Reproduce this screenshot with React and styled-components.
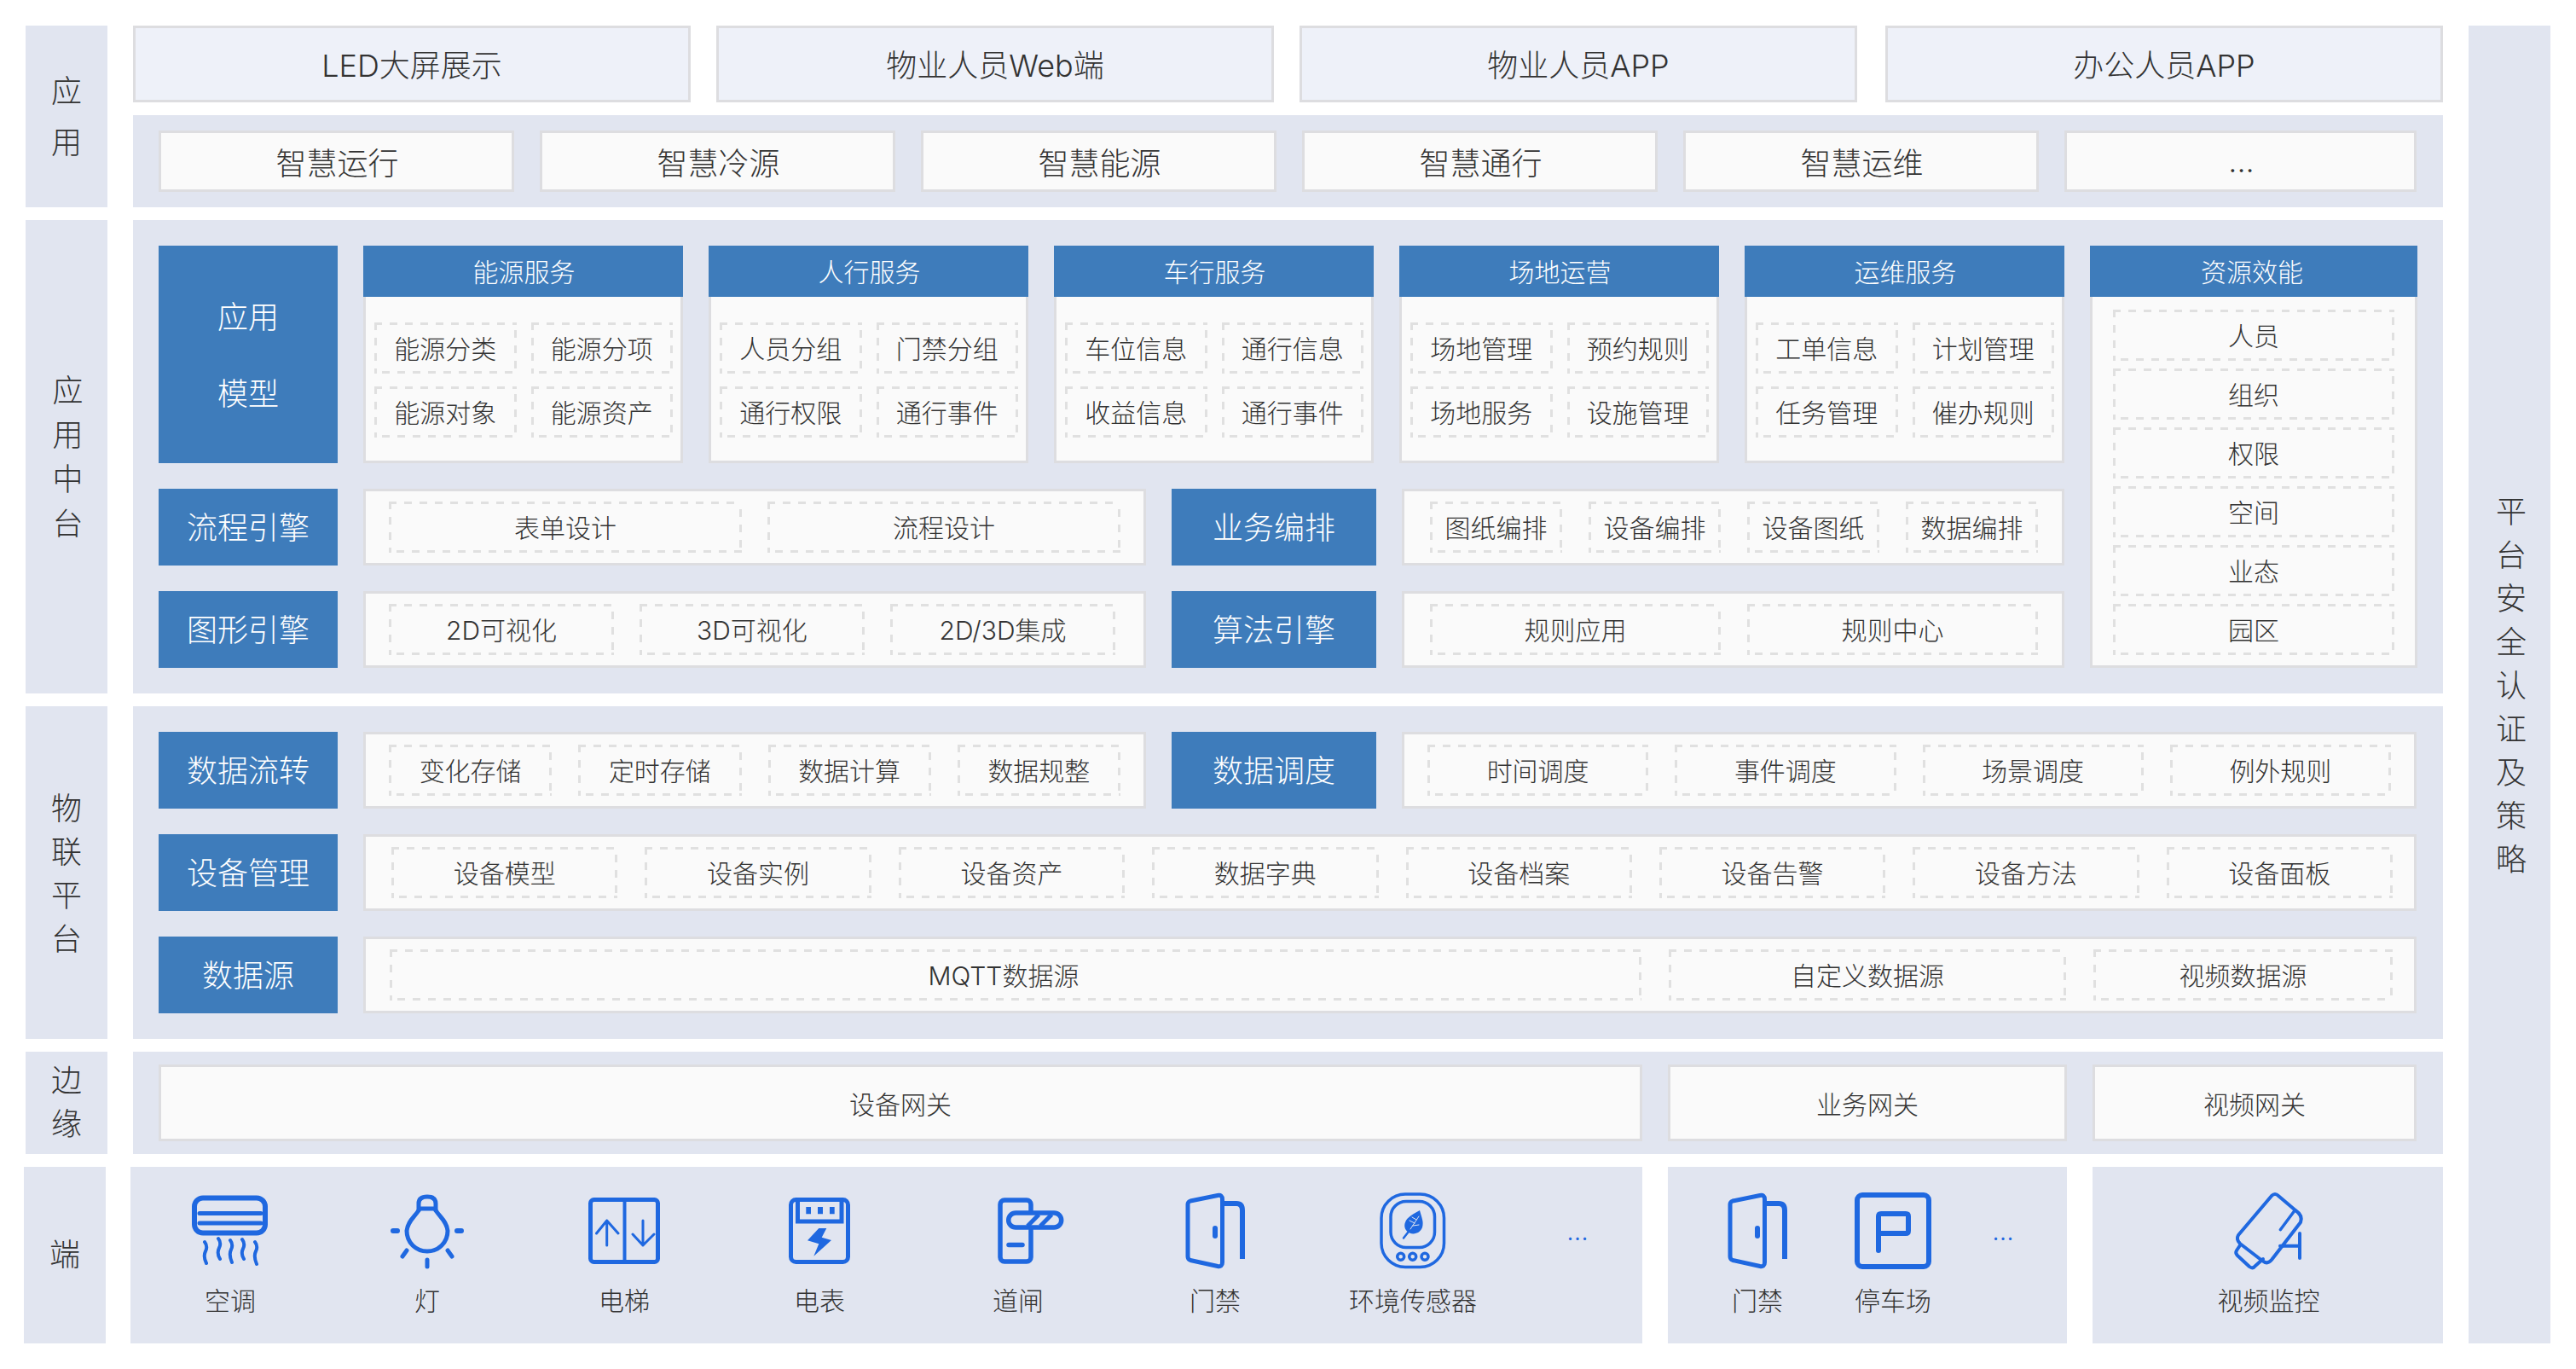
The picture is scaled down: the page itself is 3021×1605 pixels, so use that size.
import React from 'react';
import styled, { createGlobalStyle } from 'styled-components';

const INK = '#333333';
const BAND = '#e1e5f0';
const EDGE = '#dddde0';
const PAPER = '#fafafa';
const BLUE = '#3e7cbb';
const ICON = '#1f68e0';
const DASH = '#e0e0e0';

const Global = createGlobalStyle`
  html, body { margin: 0; padding: 0; background: #fff; }
  body {
    width: 3021px; height: 1605px; overflow: hidden;
    font-family: "Inter", "Noto Sans CJK SC", "Noto Sans", sans-serif;
    font-weight: 300; color: ${INK};
  }
  * { box-sizing: border-box; }
`;

const Page = styled.div`
  display: flex; gap: 30px;
  width: 3021px; height: 1605px;
  padding: 30px;
`;
const Main = styled.div`
  display: flex; flex-direction: column; gap: 15px;
  width: 2835px;
`;
const Layer = styled.section`
  display: flex; gap: 30px; height: ${p => p.$h}px;
`;
const SideLabel = styled.div`
  flex: none; width: 96px; height: 100%;
  display: flex; align-items: center; justify-content: center;
  background: ${BAND};
  font-size: 36px; line-height: ${p => p.$lh || 51}px;
  padding-left: ${p => p.$dx || 0}px;
  padding-top: ${p => p.$dy || 0}px;
`;
const SideText = styled.span`
  display: block; width: 36px; text-align: center; word-break: break-all;
`;
const Security = styled(SideLabel)`
  height: 1545px;
`;
const Stack = styled.div`
  flex: 1; min-width: 0; display: flex; flex-direction: column; gap: 15px;
`;
const TopRow = styled.div`
  display: grid; grid-template-columns: repeat(3, 654px) 657px; column-gap: 30px; height: 90px;
`;
const TopBox = styled.div`
  display: flex; align-items: center; justify-content: center;
  padding-bottom: 3px;
  background: #eef1f9; border: 3px solid ${EDGE};
  font-size: 36px;
  &:last-child { margin-left: 3px; }
`;
const AppBand = styled.div`
  display: grid; grid-template-columns: repeat(5, 417px) 413px; column-gap: 30px; height: 108px;
  padding: 18px 0 18px 30px; background: ${BAND};
`;
const AppBox = styled.div`
  display: flex; align-items: center; justify-content: center;
  padding-left: 2px;
  background: ${PAPER}; border: 3px solid ${EDGE}; font-size: 36px;
`;
const Band = styled.div`
  flex: 1; min-width: 0; display: flex;
  gap: 30px;
  padding: ${p => p.$pad};
  background: ${BAND};
`;
const Column = styled.div`
  flex: 1; min-width: 0; display: flex; flex-direction: column; gap: 30px;
`;
const Line = styled.div`
  display: flex; gap: 30px; height: ${p => p.$h || 90}px;
`;
const BlueTag = styled.div`
  flex: none; width: ${p => p.$w}px;
  display: flex; align-items: center; justify-content: center; text-align: center;
  padding-top: 2px;
  background: ${BLUE}; color: #fff; font-size: 36px;
  line-height: ${p => p.$lh || 50}px;
`;
const Panel = styled.div`
  flex: ${p => (p.$w ? 'none' : 1)}; width: ${p => (p.$w ? `${p.$w}px` : 'auto')}; min-width: 0;
  display: flex; align-items: center; gap: ${p => p.$gap || 30}px;
  padding: ${p => p.$pad || '0 27px'};
  background: ${PAPER}; border: 3px solid ${EDGE}; font-size: 30px;
`;
const Chip = styled.div`
  flex: ${p => (p.$w ? 'none' : 1)}; width: ${p => (p.$w ? `${p.$w}px` : 'auto')};
  min-width: 0; height: 60px;
  display: flex; align-items: center; justify-content: center;
  padding: 0 ${p => p.$pr || 0}px 2px 0;
  font-size: 30px; white-space: nowrap;
  background:
    repeating-linear-gradient(90deg, ${DASH} 0 9px, transparent 9px 18px) left top / 100% 3px no-repeat,
    repeating-linear-gradient(90deg, transparent 0 9px, ${DASH} 9px 18px) left bottom / 100% 3px no-repeat,
    repeating-linear-gradient(180deg, ${DASH} 0 9px, transparent 9px 18px) left top / 3px 100% no-repeat,
    repeating-linear-gradient(180deg, transparent 0 9px, ${DASH} 9px 18px) right top / 3px 100% no-repeat;
`;
const ResourceChip = styled(Chip)`
  flex: none;
`;
const Cards = styled.div`
  flex: none; display: flex; gap: 30px;
`;
const Card = styled.div`
  flex: none; width: ${p => p.$w}px; display: flex; flex-direction: column;
`;
const CardHead = styled.div`
  flex: none; height: 60px; display: flex; align-items: center; justify-content: center;
  padding: 0 ${p => p.$pr || 0}px 3px ${p => (p.$pr ? 0 : 2)}px;
  background: ${BLUE}; color: #fff; font-size: 30px;
`;
const CardBody = styled.div`
  flex: 1; display: grid; grid-template-columns: 1fr 1fr;
  gap: 15px 17px; align-content: start;
  padding: 30px 9px 0 10px;
  background: ${PAPER}; border: 3px solid ${EDGE}; border-top: 0;
`;
const ResourceBody = styled.div`
  flex: 1; display: flex; flex-direction: column; gap: 9px;
  padding: 15px 24px 0;
  background: ${PAPER}; border: 3px solid ${EDGE}; border-top: 0;
`;
const EdgeBox = styled.div`
  flex: ${p => (p.$w ? 'none' : 1)}; width: ${p => (p.$w ? `${p.$w}px` : 'auto')};
  display: flex; align-items: center; justify-content: center;
  background: ${PAPER}; border: 3px solid ${EDGE}; font-size: 30px;
`;
const Devices = styled.div`
  display: flex; gap: 30px; flex: 1; min-width: 0;
`;
const DeviceLabel = styled(SideLabel)`
  margin-left: -2px; margin-right: -1px;
`;
const DeviceBand = styled.div`
  flex: none; width: ${p => p.$w}px; height: 207px;
  display: flex; align-items: flex-start; padding-top: 30px;
  background: ${BAND};
`;
const Device = styled.div`
  flex: none; width: ${p => p.$w}px;
  display: flex; flex-direction: column; align-items: center;
`;
const DeviceIcon = styled.svg`
  display: block; height: 90px; overflow: visible; flex: none;
  margin-left: ${p => p.$ml || 0}px;
  fill: none; stroke: ${ICON}; stroke-linecap: round; stroke-linejoin: round;
`;
const DeviceName = styled.div`
  margin-top: 17px; font-size: 30px; line-height: 40px; white-space: nowrap;
`;
const More = styled.div`
  flex: none; width: ${p => p.$w}px; text-align: center;
  color: ${ICON}; font-size: 30px; line-height: 30px; margin-top: 30px;
`;

const Ac = () => (
  <DeviceIcon width="90" viewBox="0 0 90 90">
    <rect x="3" y="6.5" width="83" height="41" rx="10" strokeWidth="6" />
    <path d="M9 24.5H81M9 36H81" strokeWidth="5" />
    <path strokeWidth="4" d="M15 58c3 4 3 7 1 11c-2 4-2 8 1 14M31 54c3 4 3 7 1 11c-2 4-2 8 1 13M45 56c3 4 3 7 1 11c-2 4-2 8 1 15M59 55c3 4 3 7 1 11c-2 4-2 7 1 12M74 58c3 4 3 7 1 11c-2 4-2 8 1 15" />
  </DeviceIcon>
);
const Lamp = () => (
  <DeviceIcon width="86" viewBox="0 0 86 90">
    <path strokeWidth="5" d="M33 21C28 29 20 34 19 45C19 59 30 69 43 69C56 69 67 59 67 45C66 34 58 29 53 21" />
    <path strokeWidth="5" d="M33 19H53M33 21V13C33 7 37 5 43 5C49 5 53 7 53 13V21" />
    <path strokeWidth="6" d="M3 45H8M78 45H83" />
    <path strokeWidth="5" d="M14 75L19 68M67 68L72 75M43 79V87" />
  </DeviceIcon>
);
const Lift = () => (
  <DeviceIcon width="84" viewBox="0 0 84 90">
    <rect x="2.5" y="8.5" width="79" height="73" rx="4" strokeWidth="5" />
    <path strokeWidth="4" strokeLinecap="butt" d="M42.5 8V82" />
    <path strokeWidth="3" d="M21.7 62V33M9.5 48L21.7 33L35 48M64 33V62M52 49L64 62L77 49" />
  </DeviceIcon>
);
const Meter = () => (
  <DeviceIcon width="72" viewBox="0 0 72 90">
    <rect x="2.5" y="8.5" width="67" height="73" rx="6" strokeWidth="5" />
    <path strokeWidth="5" strokeLinecap="butt" strokeLinejoin="miter" d="M10.5 9V34H62V9" />
    <path fill={ICON} stroke="none" d="M20.3 17H26V25.3H20.3ZM34 17H40V25.3H34ZM48 17H53.7V25.3H48ZM35.3 42H44.3L38.7 52.7L50 56L29.3 74.7L35.3 60.3L22 56.3Z" />
  </DeviceIcon>
);
const Gate = () => (
  <DeviceIcon width="78" viewBox="0 0 78 90" $ml={30}>
    <path strokeWidth="5.5" d="M39 22V14a5 5 0 0 0-5-5H8a5 5 0 0 0-5 5V76a5 5 0 0 0 5 5H34a5 5 0 0 0 5-5V44" />
    <rect x="12.7" y="24" width="62" height="17" rx="8.5" strokeWidth="5.5" />
    <path strokeWidth="5" strokeLinecap="butt" d="M35 39.5L48.3 26M50 39.5L63.3 26" />
    <path strokeWidth="5.5" d="M13 61.5H29" />
  </DeviceIcon>
);
const Door = () => (
  <DeviceIcon width="70" viewBox="0 0 70 90">
    <path strokeWidth="5" d="M3 14Q3 11 6 10L38 3.5Q43.5 2.5 43.5 8V82Q43.5 87.5 38 86.5L6 79.5Q3 78.5 3 75Z" />
    <path strokeWidth="6" strokeLinecap="butt" d="M44 13H60Q67 13 67 21V78" />
    <path strokeWidth="6" d="M35 42V51" />
  </DeviceIcon>
);
const Sensor = () => (
  <DeviceIcon width="78" viewBox="0 0 78 90">
    <rect x="2" y="2" width="73.5" height="85.5" rx="28" strokeWidth="3.5" />
    <rect x="13" y="10.5" width="51.5" height="54" rx="18" strokeWidth="3.5" />
    <path fill={ICON} stroke="none" d="M47 21C49 29 52 34 50 41C48 47 41 50 35 47.5C30 45 28 40 30 35C32 29 40 25 47 21Z" />
    <path strokeWidth="2.5" d="M28 53.5L37 42" />
    <path strokeWidth="1" stroke={BAND} d="M36 43L46 28M39 39L46 38M41 36L35 33M43 32L38 29" />
    <circle cx="24.7" cy="75.3" r="4" strokeWidth="3.5" />
    <circle cx="38.7" cy="75.3" r="4" strokeWidth="3.5" />
    <circle cx="53" cy="75.3" r="4" strokeWidth="3.5" />
  </DeviceIcon>
);
const Parking = () => (
  <DeviceIcon width="90" viewBox="0 0 90 90">
    <rect x="3" y="3" width="84" height="84" rx="6" strokeWidth="6" />
    <path strokeWidth="6" d="M28 68V28Q28 25 31 25H60Q63 25 63 28V45Q63 48 60 48H28" />
  </DeviceIcon>
);
const Camera = () => (
  <DeviceIcon width="81" viewBox="0 0 81 90">
    <path strokeWidth="4" d="M44 4Q48 0 52 4L72 21Q81 27 78 35L44 79Q39 85 33 80L7 60Q2 55 5 50Z" />
    <path strokeWidth="3.5" d="M70.5 22L54.3 43.7" />
    <path strokeWidth="4" d="M7 62L3 68Q1 71 4 74L18 87Q22 90 25 86L34 78" />
    <path strokeWidth="4" d="M54 62.7H77M77 48V77" />
  </DeviceIcon>
);

const apps = ['LED大屏展示', '物业人员Web端', '物业人员APP', '办公人员APP'];
const smart = ['智慧运行', '智慧冷源', '智慧能源', '智慧通行', '智慧运维', '...'];
const services = [
  ['能源服务', ['能源分类', '能源分项', '能源对象', '能源资产']],
  ['人行服务', ['人员分组', '门禁分组', '通行权限', '通行事件']],
  ['车行服务', ['车位信息', '通行信息', '收益信息', '通行事件']],
  ['场地运营', ['场地管理', '预约规则', '场地服务', '设施管理']],
  ['运维服务', ['工单信息', '计划管理', '任务管理', '催办规则']],
];
const resources = ['人员', '组织', '权限', '空间', '业态', '园区'];
const owned = [
  [Ac, '空调', 234], [Lamp, '灯', 228], [Lift, '电梯', 234], [Meter, '电表', 224],
  [Gate, '道闸', 242], [Door, '门禁', 220], [Sensor, '环境传感器', 244],
];
const parking = [[Door, '门禁', 210], [Parking, '停车场', 108]];

const Chips = ({ items, w }) => items.map((t, i) => <Chip key={i} $w={w}>{t}</Chip>);

export default function App() {
  return (
    <>
      <Global />
      <Page>
        <Main>
          <Layer $h={213}>
            <SideLabel $lh={60}><SideText>应用</SideText></SideLabel>
            <Stack>
              <TopRow>{apps.map(t => <TopBox key={t}>{t}</TopBox>)}</TopRow>
              <AppBand>{smart.map(t => <AppBox key={t}>{t}</AppBox>)}</AppBand>
            </Stack>
          </Layer>

          <Layer $h={555}>
            <SideLabel $dx={3} $lh={52}><SideText>应用中台</SideText></SideLabel>
            <Band $pad="30px">
              <Column>
                <Line $h={255}>
                  <BlueTag $w={210} $lh={90}>应用<br />模型</BlueTag>
                  <Cards>
                    {services.map(([head, items]) => (
                      <Card key={head} $w={375}>
                        <CardHead>{head}</CardHead>
                        <CardBody><Chips items={items} /></CardBody>
                      </Card>
                    ))}
                  </Cards>
                </Line>
                <Line>
                  <BlueTag $w={210}>流程引擎</BlueTag>
                  <Panel $w={918}><Chips items={['表单设计', '流程设计']} /></Panel>
                  <BlueTag $w={240}>业务编排</BlueTag>
                  <Panel $pad="0 28px 0 30px" $gap={31}><Chips items={['图纸编排', '设备编排', '设备图纸', '数据编排']} /></Panel>
                </Line>
                <Line>
                  <BlueTag $w={210}>图形引擎</BlueTag>
                  <Panel $w={918}><Chips items={['2D可视化', '3D可视化', '2D/3D集成']} w={264} /></Panel>
                  <BlueTag $w={240}>算法引擎</BlueTag>
                  <Panel $pad="0 28px 0 30px" $gap={31}><Chips items={['规则应用', '规则中心']} /></Panel>
                </Line>
              </Column>
              <Card $w={384}>
                <CardHead $pr={4}>资源效能</CardHead>
                <ResourceBody>{resources.map(t => <ResourceChip key={t}>{t}</ResourceChip>)}</ResourceBody>
              </Card>
            </Band>
          </Layer>

          <Layer $h={390}>
            <SideLabel $dy={3}><SideText>物联平台</SideText></SideLabel>
            <Band $pad="30px 31px 30px 30px">
              <Column>
                <Line>
                  <BlueTag $w={210}>数据流转</BlueTag>
                  <Panel $w={918} $gap={31}><Chips items={['变化存储', '定时存储', '数据计算', '数据规整']} /></Panel>
                  <BlueTag $w={240}>数据调度</BlueTag>
                  <Panel $gap={31}><Chips items={['时间调度', '事件调度', '场景调度', '例外规则']} /></Panel>
                </Line>
                <Line>
                  <BlueTag $w={210}>设备管理</BlueTag>
                  <Panel $pad="0 25px 0 30px" $gap={32}>
                    <Chips items={['设备模型', '设备实例', '设备资产', '数据字典', '设备档案', '设备告警', '设备方法', '设备面板']} />
                  </Panel>
                </Line>
                <Line>
                  <BlueTag $w={210}>数据源</BlueTag>
                  <Panel $pad="0 25px 0 28px" $gap={32}>
                    <Chip $w={1468} $pr={28}>MQTT数据源</Chip>
                    <Chip $w={466}>自定义数据源</Chip>
                    <Chip $w={351}>视频数据源</Chip>
                  </Panel>
                </Line>
              </Column>
            </Band>
          </Layer>

          <Layer $h={120}>
            <SideLabel $lh={51}><SideText>边缘</SideText></SideLabel>
            <Band $pad="15px 31px 15px 30px">
              <EdgeBox $w={1740}>设备网关</EdgeBox>
              <EdgeBox $w={468}>业务网关</EdgeBox>
              <EdgeBox>视频网关</EdgeBox>
            </Band>
          </Layer>

          <Layer $h={207}>
            <DeviceLabel><SideText>端</SideText></DeviceLabel>
            <Devices>
              <DeviceBand $w={1773}>
                {owned.map(([Icon, name, w]) => (
                  <Device key={name} $w={w}><Icon /><DeviceName>{name}</DeviceName></Device>
                ))}
                <More $w={142}>...</More>
              </DeviceBand>
              <DeviceBand $w={468}>
                {parking.map(([Icon, name, w]) => (
                  <Device key={name} $w={w}><Icon /><DeviceName>{name}</DeviceName></Device>
                ))}
                <More $w={150}>...</More>
              </DeviceBand>
              <DeviceBand $w={411}>
                <Device $w={413}><Camera /><DeviceName>视频监控</DeviceName></Device>
              </DeviceBand>
            </Devices>
          </Layer>
        </Main>
        <Security $dx={4} $dy={4}><SideText>平台安全认证及策略</SideText></Security>
      </Page>
    </>
  );
}
